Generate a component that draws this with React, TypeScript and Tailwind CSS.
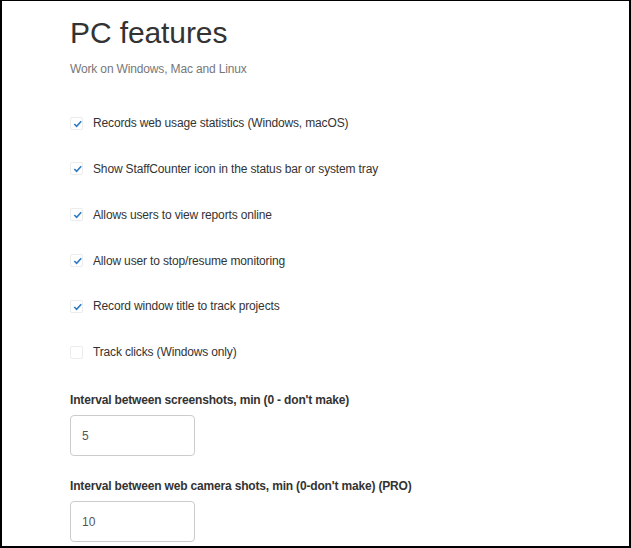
import React from 'react';

const features = [
  { label: 'Records web usage statistics (Windows, macOS)', checked: true },
  { label: 'Show StaffCounter icon in the status bar or system tray', checked: true },
  { label: 'Allows users to view reports online', checked: true },
  { label: 'Allow user to stop/resume monitoring', checked: true },
  { label: 'Record window title to track projects', checked: true },
  { label: 'Track clicks (Windows only)', checked: false },
];

const CheckBox: React.FC<{ checked: boolean }> = ({ checked }) => (
  <div className="relative w-[13px] h-[13px] border border-[#ececec] rounded-[2px] bg-white">
    {checked && (
      <svg viewBox="0 0 13 13" className="absolute left-[1px] top-[0px] w-[12px] h-[12px]">
        <path d="M2.5 6.5 L5 9 L10 3.5" fill="none" stroke="#2f7cc4" strokeWidth="1.8" />
      </svg>
    )}
  </div>
);

const App: React.FC = () => {
  return (
    <div
      className="w-[631px] h-[548px] bg-white border-black border-t border-l-2 border-r-2 border-b-2 overflow-hidden"
      style={{ fontFamily: '"Liberation Sans", Arial, sans-serif' }}
    >
      <div className="pl-[68px] pt-[15px]">
        <h1 className="text-[30px] leading-[33px] text-[#333] tracking-[-0.1px]">PC features</h1>
        <p className="mt-[12px] text-[12px] leading-[16px] text-[#777] tracking-[-0.15px]">
          Work on Windows, Mac and Linux
        </p>

        {/* Feature toggles */}
        <div className="mt-[36px] flex flex-col gap-[25.85px]">
          {features.map((f) => (
            <div key={f.label} className="flex items-center h-[20px]">
              <CheckBox checked={f.checked} />
              <span className="ml-[10px] text-[12px] text-[#333] tracking-[-0.15px]">{f.label}</span>
            </div>
          ))}
        </div>

        {/* Intervals */}
        <div className="mt-[30px]">
          <label className="block text-[12px] leading-[16px] font-bold text-[#333] tracking-[-0.17px]">
            Interval between screenshots, min (0 - don't make)
          </label>
          <div className="mt-[7px] w-[125px] h-[41px] border border-[#ccc] rounded-[4px] flex items-center pl-[11px] text-[12px] text-[#555]">
            5
          </div>
          <label className="block mt-[22px] text-[12px] leading-[16px] font-bold text-[#333] tracking-[-0.17px]">
            Interval between web camera shots, min (0-don't make) (PRO)
          </label>
          <div className="mt-[7px] w-[125px] h-[41px] border border-[#ccc] rounded-[4px] flex items-center pl-[11px] text-[12px] text-[#555]">
            10
          </div>
        </div>
      </div>
    </div>
  );
};

export default App;
